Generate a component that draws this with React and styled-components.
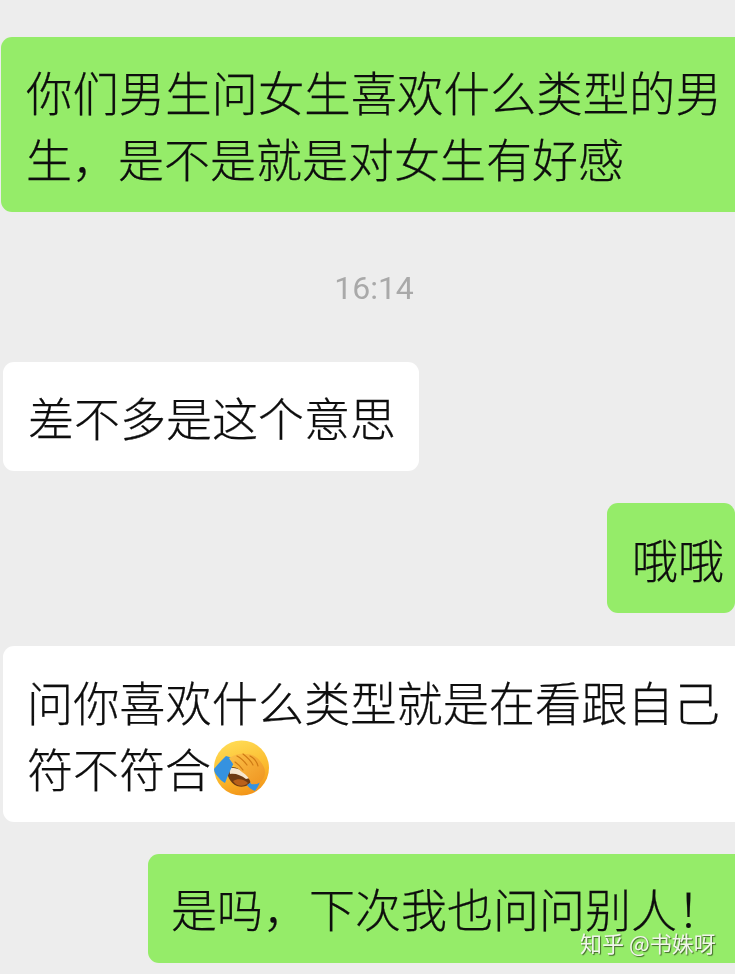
import React from "react";
import styled, { createGlobalStyle } from "styled-components";

const Global = createGlobalStyle`
  html, body { margin: 0; padding: 0; background: #ededed; }
  body { width: 735px; height: 974px; overflow: hidden; }
`;

const Chat = styled.div`
  position: relative;
  width: 735px;
  height: 974px;
  box-sizing: border-box;
  padding-top: 37px;
  background: #ededed;
  display: flex;
  flex-direction: column;
  font-family: "Noto Sans CJK SC", "Noto Sans", sans-serif;
  font-weight: 300;
  color: #0e0e0e;
  -webkit-text-stroke: 0.25px #0e0e0e;
  filter: blur(0.35px);
`;

const Row = styled.div`
  display: flex;
  justify-content: ${(p) => (p.$mine ? "flex-end" : "flex-start")};
  padding-left: ${(p) => (p.$mine ? "1px" : "3px")};
  margin-top: ${(p) => p.$gap || 0}px;
`;

const Bubble = styled.div`
  box-sizing: border-box;
  width: ${(p) => p.$width}px;
  height: ${(p) => p.$height}px;
  padding: ${(p) => p.$top}px 0 0 ${(p) => p.$left}px;
  border-radius: ${(p) => (p.$wide ? "11px 0 0 11px" : "11px")};
  background: ${(p) => (p.$mine ? "#95ec69" : "#ffffff")};
  white-space: nowrap;
`;

const Line = styled.div`
  display: flex;
  align-items: center;
  height: ${(p) => p.$height || 67}px;
  line-height: ${(p) => p.$height || 67}px;
  font-size: ${(p) => p.$size || 46}px;
`;

const Time = styled.div`
  margin-top: 56px;
  height: 40px;
  line-height: 40px;
  text-align: center;
  padding-left: 13px;
  font-family: Roboto, sans-serif;
  font-weight: 400;
  font-size: 32px;
  color: #a9a9a9;
  -webkit-text-stroke: 0;
`;

const Emoji = styled.svg`
  width: 57px;
  height: 57px;
  margin-top: 2px;
  margin-left: 2px;
  flex: none;
`;

const Watermark = styled.div`
  position: absolute;
  left: 580px;
  top: 931px;
  font-family: "Noto Sans CJK SC", sans-serif;
  font-weight: 400;
  font-size: 22px;
  line-height: 22px;
  color: #f2f5ec;
  white-space: nowrap;
  -webkit-text-stroke: 0;
  text-shadow: 1px 1px 1px rgba(50, 80, 30, 0.85);
`;

const FacePalm = () => (
  <Emoji viewBox="0 0 57 57">
    <defs>
      <linearGradient id="face" x1="0.3" y1="0" x2="0.6" y2="1">
        <stop offset="0" stopColor="#ffdc55" />
        <stop offset="0.6" stopColor="#fbb92c" />
        <stop offset="1" stopColor="#f29318" />
      </linearGradient>
      <linearGradient id="hand" x1="0" y1="0" x2="1" y2="1">
        <stop offset="0" stopColor="#fbc048" />
        <stop offset="1" stopColor="#ef9420" />
      </linearGradient>
    </defs>
    <circle cx="28.5" cy="28" r="27.5" fill="url(#face)" />
    <path d="M14 27 C22 26 33 30 39 39 C37 46 30 48 24 46 C17 43 13 35 14 27Z" fill="#6e3a12" />
    <path d="M16 28 C23 27 32 31 37 38 L33 39 C28 35 22 33 17 34Z" fill="#f6e6cf" />
    <path d="M20 41 C25 38 31 39 35 43 C31 47 24 47 20 41Z" fill="#b9601a" />
    <path d="M13 16 L23 19 C19 26 15 35 12 43 C9 41 7 40 6 38 C3 35 1 32 1 29 C5 24 9 20 13 16Z" fill="#3592e0" />
    <path d="M34 45 L47 36 C48 41 46 46 42 51 C39 50 36 48 34 45Z" fill="#3592e0" />
    <g transform="translate(1 3)">
      <path d="M15 15 C21 11 27 10 32 11 C38 11 43 14 46 18 C51 24 53 30 49 36 C47 40 43 42 37 41 C36 36 33 32 28 29 C25 26 21 24 19 21 C18 19 16 17 15 15Z" fill="url(#hand)" />
      <path d="M23 13 C27 15 30 18 33 22 M29 11 C33 14 37 18 39 22 M21 19 C24 21 27 24 29 27 M36 13 C40 15 43 19 44 23" stroke="#cf7a14" strokeWidth="1.2" fill="none" strokeLinecap="round" />
    </g>
  </Emoji>
);

export default function App() {
  return (
    <Chat>
      <Global />
      <Row $mine>
        <Bubble $mine $wide $width={734} $height={175} $top={20} $left={25}>
          <Line $size={46.4}>你们男生问女生喜欢什么类型的男</Line>
          <Line>生，是不是就是对女生有好感</Line>
        </Bubble>
      </Row>
      <Time>16:14</Time>
      <Row $gap={54}>
        <Bubble $width={416} $height={109} $top={21} $left={25}>
          <Line>差不多是这个意思</Line>
        </Bubble>
      </Row>
      <Row $mine $gap={32}>
        <Bubble $mine $width={128} $height={110} $top={22} $left={25}>
          <Line>哦哦</Line>
        </Bubble>
      </Row>
      <Row $gap={33}>
        <Bubble $wide $width={732} $height={176} $top={21} $left={24}>
          <Line $size={46.2}>问你喜欢什么类型就是在看跟自己</Line>
          <Line>符不符合<FacePalm /></Line>
        </Bubble>
      </Row>
      <Row $mine $gap={32}>
        <Bubble $mine $wide $width={587} $height={109} $top={28} $left={23}>
          <Line $height={50}>是吗，下次我也问问别人！</Line>
        </Bubble>
      </Row>
      <Watermark>知乎 @书姝呀</Watermark>
    </Chat>
  );
}
